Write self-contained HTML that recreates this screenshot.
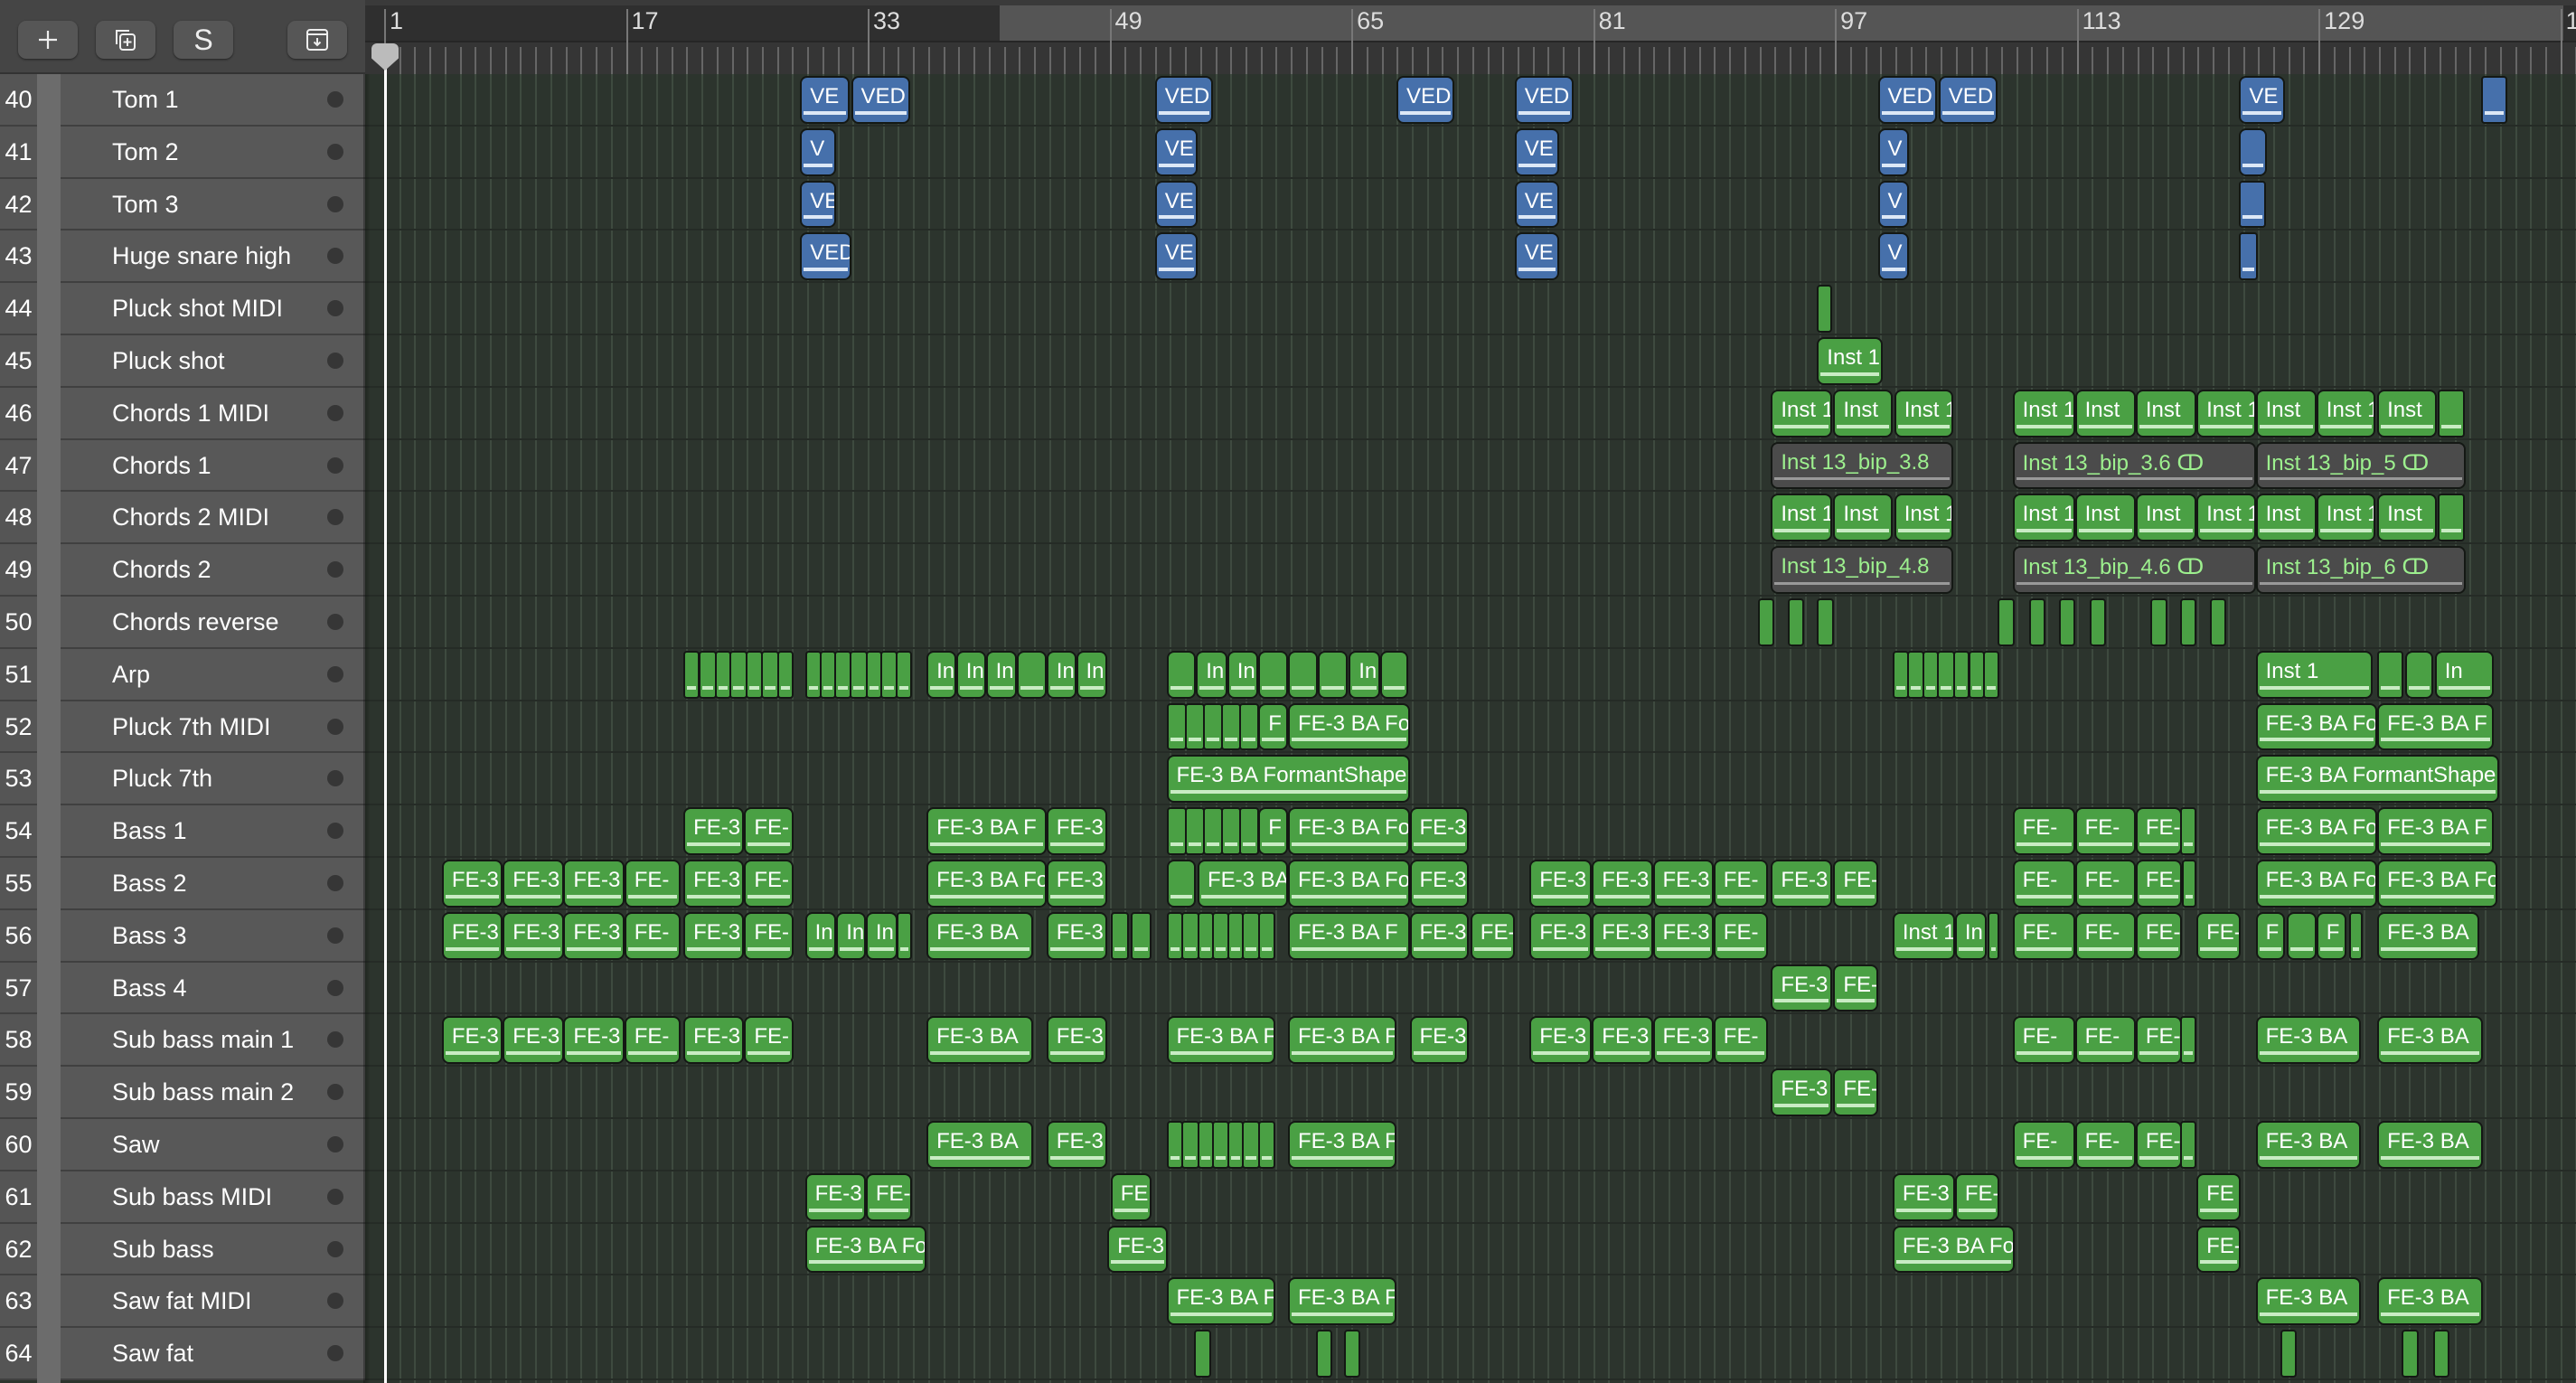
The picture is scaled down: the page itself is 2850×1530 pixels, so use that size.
<!DOCTYPE html>
<html><head><meta charset="utf-8"><style>
*{margin:0;padding:0;box-sizing:border-box}
body{width:2850px;height:1530px;background:#2c342d;overflow:hidden;position:relative;font-family:"Liberation Sans",sans-serif}
.a{position:absolute}
.clip{position:absolute;border:2px solid #141814;border-radius:8px;overflow:hidden;color:#fff;font-size:24px;white-space:nowrap;padding:7px 0 0 9px}
.g{background:#4aa044}.b{background:#4670ab}.gr{background:#4b4b4b;color:#9df08e}
.clip .ln{position:absolute;left:2px;right:2px;bottom:8px;height:4px;background:#c9ecc4}
.b .ln{background:#dde8f6}.gr .ln{background:#999;height:3px}
.row{position:absolute;left:0;width:404px;height:57.8px;border-bottom:2px solid #404040}
.num{position:absolute;left:0;top:0;width:41px;height:100%;background:#555;color:#fff;font-size:27px;line-height:56px;text-align:center}
.name{position:absolute;left:67px;top:0;right:0;height:100%;background:#585858;color:#fff;font-size:27px;line-height:56px;padding-left:57px}
.dot{position:absolute;left:362px;top:19px;width:18px;height:18px;border-radius:50%;background:#363636}
.btn{position:absolute;top:23px;width:66px;height:42px;background:#565656;border-radius:9px;color:#eee;font-size:32px;text-align:center;line-height:42px;box-shadow:0 1px 2px #222;display:flex;align-items:center;justify-content:center}
</style></head><body>
<div class="a" style="left:0;top:0;width:404px;height:82px;background:#454545;border-bottom:2px solid #333"></div>
<div class="btn" style="left:20px"><svg width="24" height="24" viewBox="0 0 24 24"><path d="M12 2V22M2 12H22" stroke="#eee" stroke-width="2.2"/></svg></div>
<div class="btn" style="left:106px"><svg width="30" height="30" viewBox="0 0 30 30" fill="none" stroke="#eee" stroke-width="2"><path d="M5 20V5H19"/><rect x="9" y="9" width="16" height="17" rx="3"/><path d="M17 13V22M12.5 17.5H21.5"/></svg></div>
<div class="btn" style="left:192px">S</div>
<div class="btn" style="left:318px"><svg width="30" height="30" viewBox="0 0 30 30" fill="none" stroke="#eee" stroke-width="2"><rect x="4" y="4" width="22" height="22" rx="3"/><path d="M4 9H26M15 13V21M11.5 17.5L15 21L18.5 17.5"/></svg></div>
<div class="a" style="left:404px;top:0;width:2446px;height:45px;background:#2f2f2f;border-top:6px solid #3a3a3a"></div>
<div class="a" style="left:1106px;top:6px;width:1730px;height:39px;background:#555"></div>
<div class="a" style="left:404px;top:45px;width:2446px;height:37px;background:#353535;border-top:2px solid #262626"></div>
<div id="grid"></div>
<div id="tracks"></div>
<div id="clips"></div>
<div class="a" style="left:425px;top:50px;width:3px;height:1480px;background:#fff"></div>
<div class="a" style="left:411px;top:48px;width:30px;height:30px;background:#bbb;border-radius:6px 6px 0 0;clip-path:polygon(0 0,100% 0,100% 55%,50% 100%,0 55%)"></div>
<div class="a" style="left:402px;top:82px;width:8px;height:1448px;background:linear-gradient(90deg,rgba(0,0,0,.35),rgba(0,0,0,0))"></div>
<script>
var S=1.8176,X0=425,BW=16.72,H0=82,P=57.8;
var g='';
for(var i=0;i<=145;i++){var x=X0+i*BW;if(x>2850)break;
 var major=(i%16==0);
 g+='<div class="a" style="left:'+x+'px;top:'+(major?10:52)+'px;width:2px;height:'+(major?72:30)+'px;background:'+(major?'#777':'#666')+'"></div>';
 g+='<div class="a" style="left:'+x+'px;top:82px;width:2px;height:1448px;background:#3e4a3f"></div>';
 if(major)g+='<div class="a" style="left:'+(x+6)+'px;top:8px;color:#ddd;font-size:27px">'+(i+1)+'</div>';}
for(var r=0;r<25;r++)g+='<div class="a" style="left:404px;top:'+(H0+r*P+P-2)+'px;width:2446px;height:2px;background:#252b26"></div>';
document.getElementById('grid').innerHTML=g;
var names=["Tom 1","Tom 2","Tom 3","Huge snare high","Pluck shot MIDI","Pluck shot","Chords 1 MIDI","Chords 1","Chords 2 MIDI","Chords 2","Chords reverse","Arp","Pluck 7th MIDI","Pluck 7th","Bass 1","Bass 2","Bass 3","Bass 4","Sub bass main 1","Sub bass main 2","Saw","Sub bass MIDI","Sub bass","Saw fat MIDI","Saw fat"];
var t='<div class="a" style="left:41px;top:82px;width:26px;height:1448px;background:#6c6c6c;z-index:2"></div>';
names.forEach(function(n,i){t+='<div class="row" style="top:'+(H0+i*P)+'px"><div class="num">'+(40+i)+'</div><div class="name">'+n+'</div><div class="dot"></div></div>';});
document.getElementById('tracks').innerHTML=t;
function ser(a,b,n){var w=(b-a)/n,s=[];for(var i=0;i<n;i++)s.push(Math.round(a+i*w)+'-'+Math.round(a+(i+1)*w)+':');return s.join(',');}
var inst="1225-1262:Inst 1,1263-1299:Inst,1300-1336:Inst,1337-1372:Inst 1,1373-1409:Inst,1410-1445:Inst 1,1447-1482:Inst,1484-1499:";
var R=[
["b","487-516:VE,518-553:VED,703-737:VED,850-884:VED,922-957:VED,1143-1178:VED,1180-1215:VED,1363-1390:VE,1510-1525:"],
["b","487-508:V,703-728:VE,922-948:VE,1143-1161:V,1363-1379:"],
["b","487-508:VE,703-728:VE,922-948:VE,1143-1161:V,1363-1378:"],
["b","487-517:VED,703-728:VE,922-948:VE,1143-1161:V,1363-1373:"],
["g","1106-1114:"],
["g","1106-1145:Inst 1"],
["g","1078-1114:Inst 1,1116-1151:Inst,1153-1188:Inst 1,"+inst],
["gr","1078-1188:Inst 13_bip_3.8,1225-1372:Inst 13_bip_3.6 ↀ,1373-1500:Inst 13_bip_5 ↀ"],
["g","1078-1114:Inst 1,1116-1151:Inst,1153-1188:Inst 1,"+inst],
["gr","1078-1188:Inst 13_bip_4.8,1225-1372:Inst 13_bip_4.6 ↀ,1373-1500:Inst 13_bip_6 ↀ"],
["g","1070-1079:,1088-1097:,1106-1115:,1216-1225:,1235-1244:,1253-1262:,1272-1281:,1309-1318:,1327-1336:,1345-1354:"],
["g",ser(416,482,7)+","+ser(490,554,7)+",564-581:In,582-599:In,600-618:In,619-636:,637-654:In,655-673:In,710-727:,728-746:In,747-765:In,766-783:,784-801:,802-819:,821-839:In,840-856:,"+ser(1152,1216,7)+",1373-1443:Inst 1,1447-1462:,1464-1480:,1482-1517:In"],
["g",ser(710,765,5)+",766-783:F,784-857:FE-3 BA Fo,1373-1446:FE-3 BA Fo,1447-1517:FE-3 BA F"],
["g","710-857:FE-3 BA FormantShaper,1373-1520:FE-3 BA FormantShaper"],
["g","416-452:FE-3,453-482:FE-,564-636:FE-3 BA F,637-673:FE-3,"+ser(710,765,5)+",766-783:F,784-857:FE-3 BA Fo,858-893:FE-3,1225-1262:FE-,1263-1299:FE-,1300-1327:FE-,1327-1336:,1373-1446:FE-3 BA Fo,1447-1517:FE-3 BA F"],
["g","269-305:FE-3,306-342:FE-3,343-379:FE-3,380-413:FE-,416-452:FE-3,453-482:FE-,564-636:FE-3 BA Fo,637-673:FE-3,710-727:,729-783:FE-3 BA,784-857:FE-3 BA Fo,858-893:FE-3,931-968:FE-3,969-1005:FE-3,1006-1042:FE-3,1043-1075:FE-,1078-1114:FE-3,1116-1142:FE-,1225-1262:FE-,1263-1299:FE-,1300-1327:FE-,1328-1336:,1373-1446:FE-3 BA Fo,1447-1519:FE-3 BA Fo"],
["g","269-305:FE-3,306-342:FE-3,343-379:FE-3,380-413:FE-,416-452:FE-3,453-482:FE-,490-508:In,509-526:In,527-545:In,546-554:,564-628:FE-3 BA,637-673:FE-3,676-686:,688-700:,"+ser(710,775,7)+",784-857:FE-3 BA F,858-893:FE-3,895-921:FE-,931-968:FE-3,969-1005:FE-3,1006-1042:FE-3,1043-1075:FE-,1152-1189:Inst 1,1190-1208:In,1210-1216:,1225-1262:FE-,1263-1299:FE-,1300-1327:FE-,1337-1363:FE-,1373-1390:F,1392-1409:,1410-1427:F,1430-1437:,1447-1508:FE-3 BA"],
["g","1078-1114:FE-3,1116-1142:FE-"],
["g","269-305:FE-3,306-342:FE-3,343-379:FE-3,380-413:FE-,416-452:FE-3,453-482:FE-,564-628:FE-3 BA,637-673:FE-3,710-775:FE-3 BA F,784-849:FE-3 BA F,858-893:FE-3,931-968:FE-3,969-1005:FE-3,1006-1042:FE-3,1043-1075:FE-,1225-1262:FE-,1263-1299:FE-,1300-1327:FE-,1327-1336:,1373-1436:FE-3 BA,1447-1510:FE-3 BA"],
["g","1078-1114:FE-3,1116-1142:FE-"],
["g","564-628:FE-3 BA,637-673:FE-3,"+ser(710,775,7)+",784-849:FE-3 BA F,1225-1262:FE-,1263-1299:FE-,1300-1327:FE-,1327-1336:,1373-1436:FE-3 BA,1447-1510:FE-3 BA"],
["g","490-526:FE-3,527-554:FE-,676-700:FE,1152-1189:FE-3,1190-1216:FE-,1337-1363:FE"],
["g","490-563:FE-3 BA Fo,674-710:FE-3,1152-1225:FE-3 BA Fo,1337-1363:FE-"],
["g","710-775:FE-3 BA F,784-849:FE-3 BA F,1373-1436:FE-3 BA,1447-1510:FE-3 BA"],
["g","727-736:,801-810:,818-827:,1388-1397:,1462-1471:,1481-1490:"]
];
var c='';
R.forEach(function(r,i){r[1].split(',').forEach(function(s){if(!s)return;var k=s.indexOf(':'),ab=s.slice(0,k).split('-'),lab=s.slice(k+1);
 var x1=(+ab[0])*S,x2=(+ab[1])*S,top=H0+i*P+2,h=P-5,w=x2-x1+2;
 var ln='<div class="ln"></div>';
 if(i==10||i==24||(i==4)){ln='';}
 c+='<div class="clip '+r[0]+'" style="left:'+x1.toFixed(1)+'px;top:'+top.toFixed(1)+'px;width:'+w.toFixed(1)+'px;height:'+h+'px;'+(w<30?'border-radius:4px;':'')+'">'+lab+ln+'</div>';});});
document.getElementById('clips').innerHTML=c;
</script>
</body></html>
